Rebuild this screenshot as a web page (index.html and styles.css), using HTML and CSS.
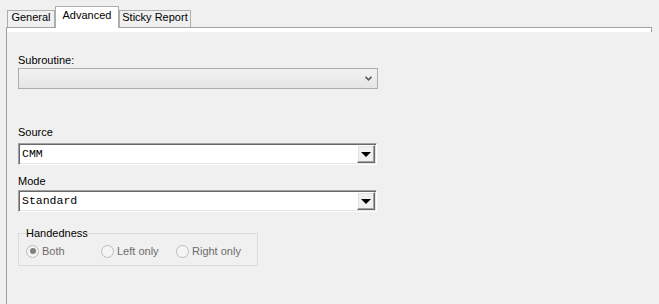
FILE: index.html
```html
<!DOCTYPE html>
<html lang="en">
<head>
  <meta charset="UTF-8">
  <title>Advanced</title>
  <link rel="stylesheet" href="styles.css">
</head>
<body>
  <div class="tabs">
    <div class="tab tab-general">General</div>
    <div class="tab tab-advanced active">Advanced</div>
    <div class="tab tab-sticky">Sticky Report</div>
  </div>

  <div class="panel">
    <div class="panel-edge"></div>
    <div class="panel-body">
      <label class="field-label subroutine-label">Subroutine:</label>
      <div class="combo-disabled">
        <svg class="chevron" width="7" height="5" viewBox="0 0 7 5">
          <polyline points="0.5,0.8 3.5,3.8 6.5,0.8" fill="none" stroke="#5a5a5a" stroke-width="1.6"/>
        </svg>
      </div>

      <label class="field-label source-label">Source</label>
      <div class="combo source-combo">
        <span class="combo-text">CMM</span>
        <span class="drop-btn"><span class="arrow"></span></span>
      </div>

      <label class="field-label mode-label">Mode</label>
      <div class="combo mode-combo">
        <span class="combo-text">Standard</span>
        <span class="drop-btn"><span class="arrow"></span></span>
      </div>

      <fieldset class="group">
        <legend>Handedness</legend>
        <div class="radio-row">
          <div class="radio"><span class="radio-dot checked"></span>Both</div>
          <div class="radio"><span class="radio-dot"></span>Left only</div>
          <div class="radio"><span class="radio-dot"></span>Right only</div>
        </div>
      </fieldset>
    </div>
  </div>
</body>
</html>
```

FILE: styles.css
```css
body {
  margin: 0;
  background: #f0f0f0;
  font-family: "Liberation Sans", Arial, sans-serif;
  font-size: 11px;
  color: #000;
  height: 304px;
  overflow: hidden;
}
.tabs {
  display: flex;
  align-items: flex-end;
  height: 21px;
  padding: 6px 0 0 7px;
  position: relative;
  z-index: 1;
}
.tab {
  box-sizing: border-box;
  height: 17px;
  border: 1px solid #adadad;
  border-bottom: none;
  background: #f0f0f0;
  text-align: center;
  white-space: nowrap;
  line-height: 13px;
}
.tab-general {
  width: 48px;
}
.tab-advanced {
  width: 64px;
}
.tab-sticky {
  width: 72px;
}
.tab.active {
  height: 22px;
  margin-bottom: -1px;
  background: #fff;
  line-height: 16px;
}
.panel {
  box-sizing: border-box;
  width: 646px;
  height: 277px;
  margin-left: 6px;
  border-left: 1px solid #a0a0a0;
  border-top: 1px solid #a0a0a0;
}
.panel-edge {
  height: 4px;
  background: #fff;
  border-right: 1px solid #a0a0a0;
}
.panel-body {
  padding-left: 11px;
}
.field-label {
  display: block;
  height: 15px;
  line-height: 15px;
}
.subroutine-label {
  margin-top: 21px;
}
.combo-disabled {
  box-sizing: border-box;
  width: 360px;
  height: 21px;
  border: 1px solid #adadad;
  background: linear-gradient(#f2f2f2, #e5e5e5);
  display: flex;
  align-items: center;
  justify-content: flex-end;
  padding-right: 5px;
  margin-bottom: 36px;
}
.source-label {
  margin-bottom: 3px;
}
.mode-label {
  margin-bottom: 1px;
}
.combo {
  box-sizing: border-box;
  display: flex;
  width: 359px;
  height: 22px;
  padding: 1px;
  border: 1px solid;
  border-color: #a0a0a0 #fff #fff #a0a0a0;
  background: #fff;
  box-shadow: inset 1px 1px #696969, inset -1px -1px #e3e3e3;
}
.source-combo {
  margin-bottom: 9px;
}
.mode-combo {
  margin-bottom: 14px;
}
.combo-text {
  flex: 1;
  padding-left: 2px;
  font-family: "Liberation Mono", "Courier New", monospace;
  font-size: 11.5px;
  line-height: 18px;
}
.drop-btn {
  box-sizing: border-box;
  width: 18px;
  height: 18px;
  background: #f0f0f0;
  border: 1px solid;
  border-color: #fff #696969 #696969 #fff;
  box-shadow: inset -1px -1px #a0a0a0, inset 1px 1px #e3e3e3;
  display: flex;
  align-items: center;
  justify-content: center;
}
.arrow {
  width: 0;
  height: 0;
  border-left: 5px solid transparent;
  border-right: 5px solid transparent;
  border-top: 5px solid #000;
}
.group {
  box-sizing: border-box;
  width: 240px;
  margin: 0;
  padding: 0 0 7px 7px;
  border: 1px solid #dcdcdc;
}
.group legend {
  padding: 0;
  line-height: 15px;
  color: #000;
}
.radio-row {
  display: flex;
  height: 14px;
  margin-top: 3px;
}
.radio {
  width: 75px;
  display: flex;
  align-items: center;
  gap: 3px;
  color: #6d6d6d;
  line-height: 14px;
}
.radio-dot {
  box-sizing: border-box;
  width: 13px;
  height: 13px;
  border-radius: 50%;
  border: 1px solid #bcbcbc;
  background: #f4f4f4;
  display: flex;
  align-items: center;
  justify-content: center;
}
.radio-dot.checked::after {
  content: "";
  width: 6px;
  height: 6px;
  border-radius: 50%;
  background: #808080;
}
```
